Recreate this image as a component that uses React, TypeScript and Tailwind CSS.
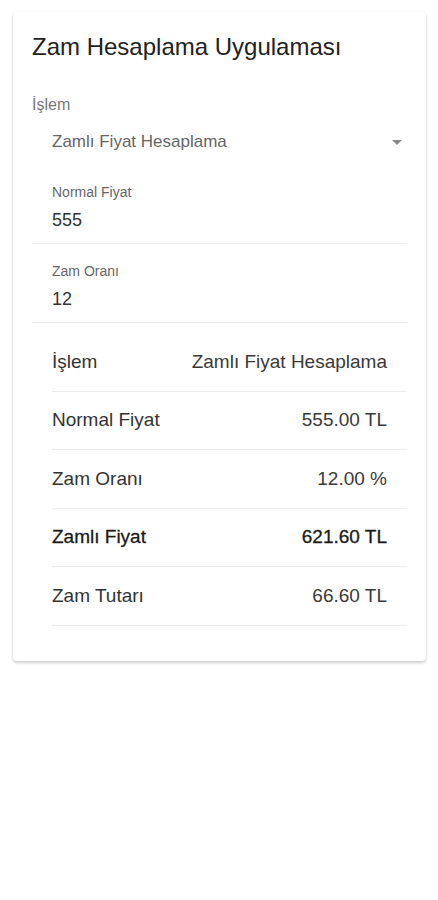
import { useState } from "react";

const rows = [
  { label: "İşlem", value: "Zamlı Fiyat Hesaplama", strong: false },
  { label: "Normal Fiyat", value: "555.00 TL", strong: false },
  { label: "Zam Oranı", value: "12.00 %", strong: false },
  { label: "Zamlı Fiyat", value: "621.60 TL", strong: true },
  { label: "Zam Tutarı", value: "66.60 TL", strong: false },
];

function Field({ label, value }: { label: string; value: string }) {
  return (
    <div className="pt-[19px] pb-[11px] pl-5 border-b border-[#ececec]">
      <div className="text-[14px] leading-4 text-[#666]">{label}</div>
      <div className="mt-2 text-[18px] leading-6 text-[#333]">{value}</div>
    </div>
  );
}

export default function App() {
  const [normal] = useState("555");
  const [rate] = useState("12");

  return (
    <div
      className="min-h-[900px] bg-white pt-3"
      style={{ fontFamily: "'Liberation Sans', Arial, sans-serif" }}
    >
      <div className="ml-[13px] mr-3 rounded bg-white px-[19px] pt-[19px] pb-5 shadow-[0_2px_3px_rgba(0,0,0,0.18),0_0_2px_rgba(0,0,0,0.08)]">
        <h1 className="text-[24px] leading-8 text-[#222]">Zam Hesaplama Uygulaması</h1>

        <div className="mt-8 text-[16px] leading-5 text-[#777]">İşlem</div>
        <div className="mt-[15px] mb-[11px] flex items-center justify-between pl-5 pr-[5px]">
          <span className="text-[17px] leading-6 text-[#666]">Zamlı Fiyat Hesaplama</span>
          <svg width="10" height="5" viewBox="0 0 10 5" className="mt-px">
            <path d="M0 0h10L5 5z" fill="#8a8a8a" />
          </svg>
        </div>

        <Field label="Normal Fiyat" value={normal} />
        <Field label="Zam Oranı" value={rate} />

        <div className="ml-5 mt-[10px] mb-[15px]">
          {rows.map((row) => (
            <div
              key={row.label}
              className={`flex items-center justify-between py-[16.75px] pr-5 border-b border-[#ececec] text-[19px] leading-6 ${
                row.strong
                  ? "text-[#1a1a1a] [-webkit-text-stroke:0.3px_#1a1a1a]"
                  : "text-[#333]"
              }`}
            >
              <span>{row.label}</span>
              <span className={row.strong ? "" : "text-[#3a3a3a]"}>{row.value}</span>
            </div>
          ))}
        </div>
      </div>
    </div>
  );
}
